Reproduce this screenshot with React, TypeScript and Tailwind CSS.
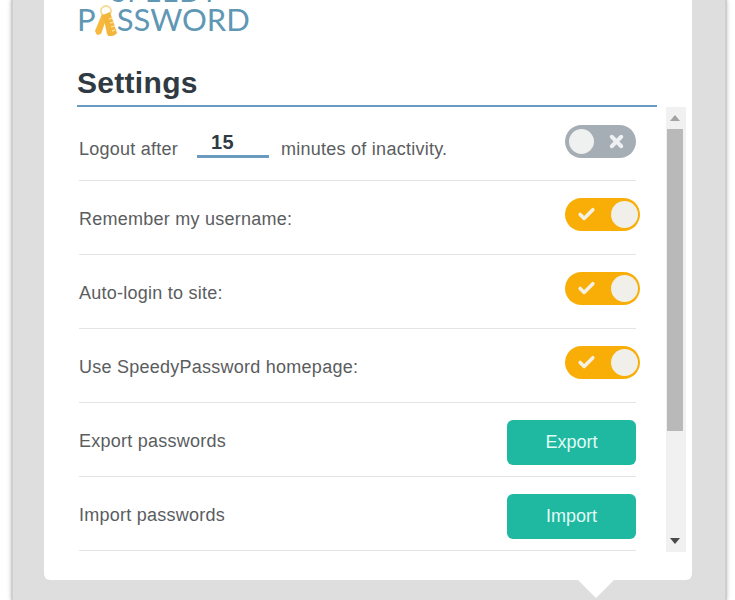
import React from 'react';
import { Check, X } from 'lucide-react';

const KeysIcon = () => (
  <svg width="24" height="34" viewBox="0 0 24 34" className="-ml-[2px] -mr-[1px] mt-[2px] shrink-0">
    <circle cx="12" cy="7" r="5" fill="none" stroke="#f6dc98" strokeWidth="2" />
    <path d="M8 10 L1 27 L3 31 L7 30 L13 13 Z" fill="#f6b93b" />
    <path d="M9 11 L16 8 L23 29 L21 31 L15 33 L13 30 Z" fill="#f3b53a" />
    <path d="M15 15 L18 14 M16 19 L20 18 M17 23 L21 22 M18 27 L21 26" stroke="#fbdf96" strokeWidth="1.5" />
  </svg>
);

const Toggle = ({ on }: { on: boolean }) =>
  on ? (
    <div className="flex h-[33px] w-[75px] items-center justify-between rounded-full bg-[#f9ae07] pl-[12px] pr-[2px]">
      <Check size={19} strokeWidth={4.5} className="text-[#f4f1e4]" />
      <div className="h-[27px] w-[27px] rounded-full bg-[#f0efe9]" />
    </div>
  ) : (
    <div className="flex h-[33px] w-[71px] items-center justify-between rounded-full bg-[#a5adb5] pl-[4px] pr-[10px]">
      <div className="h-[25px] w-[25px] rounded-full bg-[#eff0f0]" />
      <X size={19} strokeWidth={5} className="text-[#eef0f1]" />
    </div>
  );

const Row = ({ children }: { children: React.ReactNode }) => (
  <div className="flex h-[74px] w-[557px] items-center justify-between border-b border-[#e4e4e4] pt-[2px] text-[18px] tracking-[0.25px] text-[#5a5d60]">
    {children}
  </div>
);

const ToggleRow = ({ label }: { label: string }) => (
  <Row>
    <span className="mt-[2px]">{label}</span>
    <div className="-mr-[4px] -mt-[8px]"><Toggle on /></div>
  </Row>
);

const ActionRow = ({ label, action }: { label: string; action: string }) => (
  <Row>
    <span className="mt-[2px]">{label}</span>
    <button className="mt-[4px] h-[45px] w-[129px] rounded-md bg-[#1fb8a0] text-[18px] tracking-normal text-[#e2fbf6]">
      {action}
    </button>
  </Row>
);

const App: React.FC = () => {
  return (
    <div className="h-[600px] w-[735px] overflow-hidden bg-white pl-[11px] font-['Liberation_Sans',Arial,sans-serif]">
      <div className="relative h-[600px] w-[716px] border-x-[2px] border-[#cfcfcf] bg-[#dedede] pl-[31px] shadow-[0_0_4px_rgba(0,0,0,0.25)]">
        <div className="h-[580px] w-[648px] overflow-hidden rounded-b-md bg-white pl-[33px]">
          <div className="h-[36px] overflow-hidden font-['Lato',sans-serif] leading-none text-[#5f97b5]">
            <div className="-mt-[23px] h-[26px] pl-[34px] text-[28px] tracking-[1px]">SPEEDY</div>
            <div className="flex h-[33px] items-center text-[31px]">
              <span>P</span>
              <KeysIcon />
              <span>SSWORD</span>
            </div>
          </div>
          <h1 className="mt-[28px] h-[43px] w-[580px] border-b-[2px] border-[#6a9bbf] text-[30px] font-bold leading-[38px] tracking-[0.3px] text-[#2f3a42]">
            Settings
          </h1>
          <div className="flex">
            <div className="h-[445px] w-[589px] overflow-hidden pl-[2px]">
              <Row>
                <div className="flex items-center">
                  <span className="mt-[10px]">Logout after</span>
                  <span className="ml-[19px] mr-[12px] -mt-[6px] h-[33px] w-[72px] border-b-[3px] border-[#6a9bbf] pl-[14px] text-left text-[20px] font-bold leading-[34px] text-[#2f3a42]">
                    15
                  </span>
                  <span className="mt-[10px]">minutes of inactivity.</span>
                </div>
                <div className="-mt-[7px]"><Toggle on={false} /></div>
              </Row>
              <ToggleRow label="Remember my username:" />
              <ToggleRow label="Auto-login to site:" />
              <ToggleRow label="Use SpeedyPassword homepage:" />
              <ActionRow label="Export passwords" action="Export" />
              <ActionRow label="Import passwords" action="Import" />
            </div>
            <div className="flex h-[445px] w-[20px] flex-col items-center bg-[#f1f1f1] pr-[3px]">
              <div className="flex h-[22px] items-center justify-center">
                <div className="h-0 w-0 border-x-[5px] border-b-[6px] border-x-transparent border-b-[#a3a3a3]" />
              </div>
              <div className="h-[302px] w-[16px] bg-[#b9b9b9]" />
              <div className="flex flex-1 items-end justify-center pb-[8px]">
                <div className="h-0 w-0 border-x-[5px] border-t-[6px] border-x-transparent border-t-[#4a4a4a]" />
              </div>
            </div>
          </div>
        </div>
        <div className="absolute left-[565px] top-[580px] h-0 w-0 border-x-[18px] border-t-[18px] border-x-transparent border-t-white" />
      </div>
    </div>
  );
};

export default App;
